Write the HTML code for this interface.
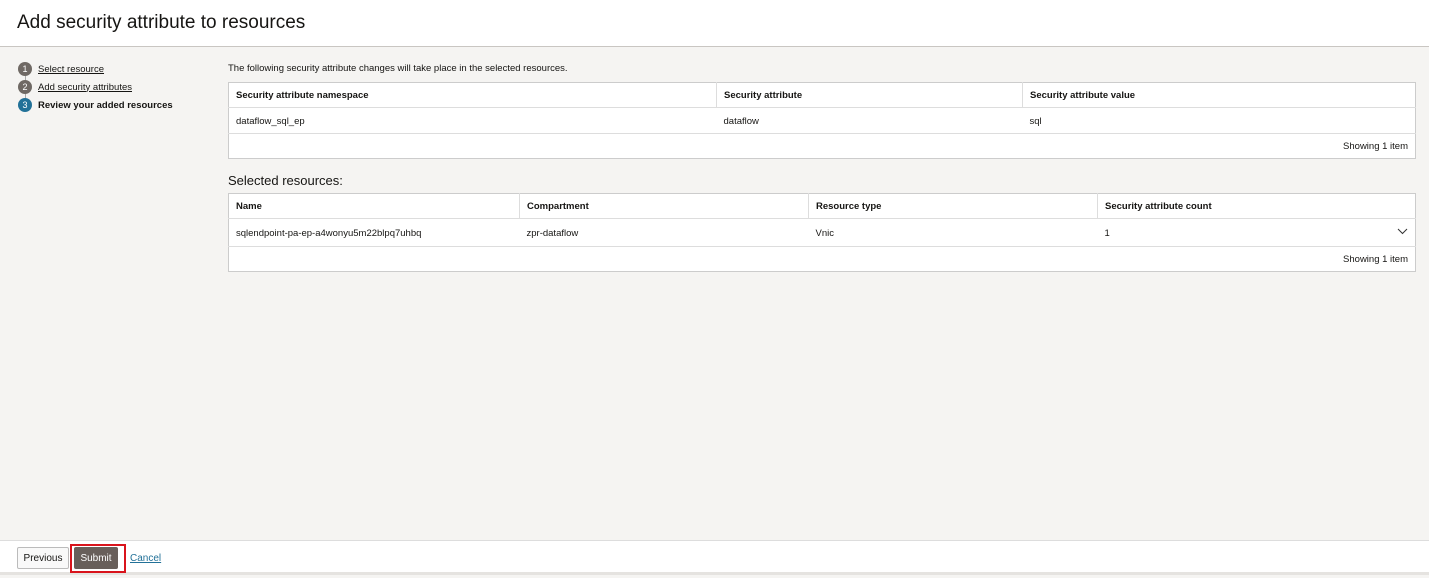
<!DOCTYPE html>
<html><head><style>
*{box-sizing:border-box;margin:0;padding:0}
body{width:1429px;height:578px;background:#f5f4f2;font-family:"Liberation Sans",sans-serif;color:#161513;position:relative;overflow:hidden;font-size:10px}
.hdr{position:absolute;left:0;top:0;width:1429px;height:47px;background:#fff;border-bottom:1px solid #c9c6c2}
.hdr h1{position:absolute;left:17px;top:12px;font-size:19px;font-weight:normal}
.step{position:absolute;left:18px;height:14px;display:flex;align-items:center;font-size:9.5px}
.step .n{width:14px;height:14px;border-radius:50%;background:#6f6964;color:#fff;font-size:9px;text-align:center;line-height:14px;margin-right:6px}
.step a{color:#161513;text-decoration:underline}
.line{position:absolute;left:24.5px;width:1px;background:#aaa}
table{position:absolute;left:228px;width:1188px;border-collapse:collapse;background:#fff;border:1px solid #ccc;font-size:9.5px}
td,th{text-align:left;padding:0 7px;border-bottom:1px solid #ddd}
th{font-weight:bold;height:25px;border-right:1px solid #ddd;padding-top:1px}
th:last-child{border-right:none}
td{height:26px;padding-top:1px}
.foot td{text-align:right;height:25px;border-bottom:none}
.ft{position:absolute;left:0;top:540px;width:1429px;height:35px;background:#fff;border-top:1px solid #ddd;border-bottom:3px solid #e5e3e0}
.btn{position:absolute;top:547px;height:22px;font-size:10px;display:flex;align-items:center;justify-content:center;border-radius:2px}
</style></head><body>
<div class="hdr"><h1>Add security attribute to resources</h1></div>
<div class="line" style="top:75px;height:30px"></div>
<div class="step" style="top:62px"><span class="n">1</span><a>Select resource</a></div>
<div class="step" style="top:80px"><span class="n">2</span><a>Add security attributes</a></div>
<div class="step" style="top:98px"><span class="n" style="background:#227198">3</span><b>Review your added resources</b></div>
<div style="position:absolute;left:228px;top:63px;font-size:9.5px">The following security attribute changes will take place in the selected resources.</div>
<table style="top:82px"><tr><th style="width:488px">Security attribute namespace</th><th style="width:306px">Security attribute</th><th>Security attribute value</th></tr>
<tr><td>dataflow_sql_ep</td><td>dataflow</td><td>sql</td></tr>
<tr class="foot"><td colspan="3">Showing 1 item</td></tr></table>
<div style="position:absolute;left:228px;top:173px;font-size:13px">Selected resources:</div>
<table style="top:193px"><tr><th style="width:291px">Name</th><th style="width:289px">Compartment</th><th style="width:289px">Resource type</th><th>Security attribute count</th></tr>
<tr><td style="height:28px">sqlendpoint-pa-ep-a4wonyu5m22blpq7uhbq</td><td>zpr-dataflow</td><td>Vnic</td><td>1<svg style="float:right" width="11" height="7" viewBox="0 0 11 7"><path d="M1 1l4.5 4.5L10 1" fill="none" stroke="#333" stroke-width="1"/></svg></td></tr>
<tr class="foot"><td colspan="4">Showing 1 item</td></tr></table>
<div class="ft"></div>
<div class="btn" style="left:17px;width:52px;border:1px solid #bbb;background:#f9f9f9">Previous</div>
<div style="position:absolute;left:70px;top:544px;width:56px;height:29px;border:2px solid #d9141c"></div>
<div class="btn" style="left:74px;width:44px;background:#685f5a;color:#fff">Submit</div>
<a style="position:absolute;left:130px;top:553px;color:#227198;text-decoration:underline;font-size:10px">Cancel</a>
</body></html>
